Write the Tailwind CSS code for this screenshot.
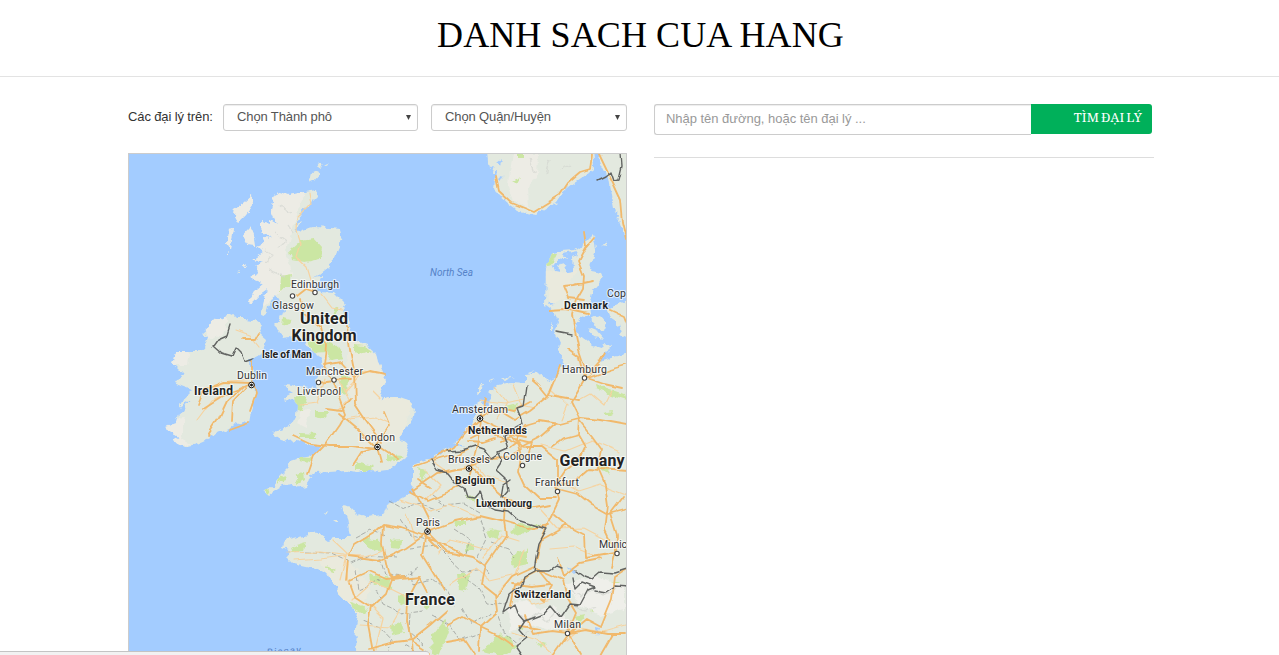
<!DOCTYPE html>
<html lang="vi">
<head>
<meta charset="utf-8">
<title>Danh sach cua hang</title>
<script src="https://cdn.jsdelivr.net/npm/@tailwindcss/browser@4"></script>
</head>
<body class="h-[655px] overflow-hidden bg-white font-['Liberation_Sans',sans-serif] text-[13px] text-[#333]">
<header class="flex h-[77px] justify-center border-b border-[#e3e3e3]">
  <h1 class="pt-[13px] pl-[2px] font-['Liberation_Serif',serif] text-[36px] leading-[44px] tracking-[0.1px] whitespace-nowrap text-black">DANH SACH CUA HANG</h1>
</header>
<main class="flex gap-[27px] pt-[27px] pl-[128px]">
  <section class="w-[499px]">
    <div class="flex h-[27px] tracking-[-0.12px]">
      <span class="w-[95px] leading-[25px] whitespace-nowrap">Các đại lý trên:</span>
      <div class="mr-[13px] flex h-[27px] w-[195px] items-center justify-between rounded-[3px] border border-[#ccc] pr-[6px] pb-[2px] pl-[13px] text-[#555] shadow-[inset_0_1px_1px_rgba(0,0,0,0.075)]"><span>Chọn Thành phô</span>
        <svg class="mt-[2px] h-[5px] w-[5px]" viewBox="0 0 5 5"><path d="M0 0h5L2.5 5z" fill="#444"/></svg></div>
      <div class="flex h-[27px] w-[196px] items-center justify-between rounded-[3px] border border-[#ccc] pr-[6px] pb-[2px] pl-[13px] text-[#555] shadow-[inset_0_1px_1px_rgba(0,0,0,0.075)]"><span>Chọn Quận/Huyện</span>
        <svg class="mt-[2px] h-[5px] w-[5px]" viewBox="0 0 5 5"><path d="M0 0h5L2.5 5z" fill="#444"/></svg></div>
    </div>
    <div class="mt-[22px] h-[502px] overflow-hidden border border-b-0 border-[#ccc]">
      <svg class="block h-[501px] w-[497px]" viewBox="129 154 497 501" font-family="Roboto, sans-serif">
        <defs>
          <filter id="coast" x="129" y="140" width="500" height="520" filterUnits="userSpaceOnUse" color-interpolation-filters="sRGB"><feTurbulence type="fractalNoise" baseFrequency=".13" numOctaves="3" seed="4"/><feDisplacementMap in="SourceGraphic" scale="7" xChannelSelector="R" yChannelSelector="G"/></filter>
          <filter id="rough" x="129" y="140" width="500" height="520" filterUnits="userSpaceOnUse" color-interpolation-filters="sRGB"><feTurbulence type="fractalNoise" baseFrequency=".06" numOctaves="1" seed="9"/><feDisplacementMap in="SourceGraphic" scale="7" xChannelSelector="R" yChannelSelector="G"/></filter>
          <g id="land">
            <path d="M278 192L289 195L305 192L316 190L317 197L308 206L300 215L295 225L301 222L295 232L305 229L313 227L330 228L341 229L343 236L340 244L334 258L329 268L320 275L311 277L323 276L322 281L312 287L320 292L334 293L343 302L347 318L352 334L355 340L367 345L376 353L378 363L382 371L386 382L379 393L382 399L390 397L400 397L411 401L415 410L413 422L405 430L399 438L406 443L409 450L405 458L397 464L388 470L380 471L368 470L355 473L345 471L330 472L315 473L309 478L306 487L300 488L292 484L283 485L275 490L268 495L263 491L272 487L280 477L287 470L290 461L302 457L313 455L322 446L308 445L298 440L287 441L280 439L272 434L280 430L290 426L296 415L297 405L294 398L285 402L284 398L293 393L287 389L285 384L298 386L310 387L318 389L316 380L320 371L324 365L318 355L310 350L305 345L308 338L297 339L290 337L282 338L278 330L274 326L281 318L284 310L280 300L276 295L272 298L268 306L266 316L261 315L264 302L267 290L260 295L252 303L248 302L254 291L262 284L252 280L250 277L260 272L255 266L264 262L253 259L263 252L257 246L264 243L263 237L271 238L261 229L261 222L270 224L270 220L277 224L271 210L274 200Z"/>
            <path d="M252 196L253 205L246 215L238 223L234 216L235 209L243 204ZM228 229L234 228L231 244L230 249L227 244ZM242 236L250 227L255 239L256 246L248 245ZM312 172L317 170L320 175L314 182L310 180ZM318 166l2-3l3 0l-2 5zM325 166l5-3l-2 4zM237 271l3-1l-2 3zM243 267l5-2l-2 3zM226 254l2-3l0 4z"/>
            <path d="M224 317L232 313L238 319L245 319L255 320L263 325L259 333L267 340L264 352L254 358L248 360L254 372L252 382L256 391L254 402L251 412L249 423L242 421L232 427L218 434L205 440L196 444L185 447L178 443L172 441L179 437L168 431L166 426L176 423L178 413L184 410L190 400L180 407L186 396L192 390L181 386L174 383L178 377L184 374L173 363L176 352L185 352L198 352L204 348L208 337L202 333L210 326L215 317L221 321Z"/>
            <path d="M487 150L488 163L489 169L494 165L492 172L497 172L495 180L494 190L500 196L508 203L515 208L518 212L526 213L536 215L545 209L556 202L562 193L573 184L583 177L592 171L594 166L592 150ZM598 150L601 166L605 170L608 178L610 190L612 203L614 213L620 220L625 235L630 240L630 150Z"/>
            <path d="M597 226L592 236L595 243L596 250L592 262L590 270L602 272L604 276L598 286L592 293L589 305L590 313L577 322L575 332L582 338L592 346L602 349L605 344L611 345L607 352L600 362L612 358L635 353L635 665L355 665L355 652L356 627L358 613L350 605L338 593L333 579L320 571L310 567L292 563L285 556L290 550L283 547L285 540L307 535L307 532L318 533L328 540L335 538L350 538L347 518L342 505L352 507L355 513L367 517L383 515L386 507L412 493L413 480L413 465L433 457L453 445L462 437L470 427L476 413L478 400L486 398L490 391L498 385L511 382L525 383L525 375L543 373L547 382L553 380L560 367L566 365L558 352L560 343L555 332L558 322L553 312L545 306L546 268L549 262L553 253L562 251L575 250L585 243L592 236Z"/>
            <path d="M592 318L600 316L606 323L604 330L595 328ZM608 309L620 302L630 304L630 339L618 334L623 327L610 318ZM586 327l12 5l6 7l-9-2zM602 244l6-3l-2 4zM324 513l5-2l-2 3zM333 520l5 0l-2 2zM478 393l4-9l2 0l-4 10zM487 381l9-2l-8 4zM502 379l12-1l-9 3zM528 373l8-2l-5 3zM551 323l3 4l-3 4zM251 340l7 2l-3 2z"/>
          </g>
          <mask id="inside" x="129" y="140" width="510" height="530" maskUnits="userSpaceOnUse"><use href="#land" fill="#fff"/></mask>
        </defs>
        <rect x="128" y="153" width="500" height="503" fill="#a3ccff"/>
        <g filter="url(#coast)">
          <use href="#land" fill="#e3e9df"/>
          <g mask="url(#inside)">
            <g fill="#efede7" opacity=".85"><path d="M262 185L306 192L296 215L291 237L286 252L292 273L282 291L264 306L240 315L245 245Z"/><path d="M222 180h34v46h-34zM222 225h35v32h-35zM513 153L538 153L537 178L528 186L529 210L514 201L508 184ZM166 348l24 2l-3 15l-17 0zM163 420l23-2l-5 20l10 6l-15 3zM302 408l8 3l-5 17l-8-4zM203 324l24-10l0 18l-18 8z"/></g>
            <g fill="#eaeadd"><path d="M350 335L384 360L390 405L360 412L345 385ZM545 272L578 269L564 298L550 307ZM320 560l25-5l26 34l-12 28l-22-20zM360 395l52 5l-8 38l-45 13zM445 425l25-5l5 17l-25 5z"/></g>
            <g fill="#cbe6a3"><path d="M290 250L300 241L314 239L322 248L320 259L305 262L292 260ZM281 276L292 274L290 287L280 290ZM308 340L324 341L338 347L342 359L333 361L327 352L312 353ZM354 345L365 346L372 351L364 354L354 351ZM341 374L348 377L347 395L340 392ZM294 397L307 398L303 411L297 410ZM299 433L318 434L316 438L299 438ZM315 412L327 412L324 419L315 417ZM355 462L374 466L370 470L355 470ZM386 455L403 456L397 461L386 460ZM295 474L304 472L305 480L298 484ZM298 456L312 457L310 463L300 461ZM278 479l8-3l-2 5l-7 3zM264 488l6 2l-3 5zM284 318l8 2l-3 6l-6-1zM333 308l5-2l1 6l-5 2z"/><path d="M290 547L307 542L304 551L292 552ZM326 566l10 4l-5 3zM363 537L380 540L381 553L374 550L363 545ZM390 540L402 539L401 549L391 548ZM369 574L389 578L392 590L381 588L370 580ZM398 596L407 593L405 605L398 602ZM351 602L369 608L364 613L352 608ZM391 626L402 622L405 632L392 635ZM432 635L444 620L449 631L440 655L431 652ZM457 574L470 574L466 591L459 590ZM466 544L475 543L474 551L466 551ZM512 556L528 549L528 565L514 568ZM514 524L541 525L525 533L512 535ZM491 529L502 531L498 540L486 535ZM454 520h11v5l-10 0zM465 496l12 1l-3 6zM595 384L607 388L625 394L627 400L611 395L596 389ZM602 413l10-2l-2 6zM551 254l6 0l-6 12l-3-2zM418 468l10 3l-7 10zM505 407l12-3l-2 9zM512 616l12 2l-1 12l-10-2zM573 616l12-2l-4 9zM590 605l12 2l-10 7zM607 581l12 0l-8 5zM511 180l9-4l-4 7zM518 153h5v5h-5zM483 651l14-16l12-1l7 14l-12 8zM596 465l9-2l7 12zM420 602l12-1l-4 8zM536 641l10 2l-6 5z"/></g>
            <g fill="#efefea"><path d="M509 606L522 600L540 610L555 605L565 620L552 630L530 624L510 632ZM565 585L595 576L625 585L625 610L600 616L580 605Z"/></g>
            <g fill="none" stroke="#d2d5cf" stroke-width="1.4" opacity=".65"><path d="M265 250l9 6l-7 6M275 232l11 8l-9 9M270 270l15 7M280 205l12 7M288 225l5 8M530 158l5 15M550 160l-5 14M561 170l8-5M516 612l10 9l11-8l10 9l10-12M570 590l10 8l13-9l10 7l14-7M574 606l11 5l11-4M520 640l9-9l10 5"/></g>
          </g>
          <g fill="#a3ccff"><path d="M483 398L489 394L490 407L482 404ZM553 266L559 258L568 260L563 254L578 251L576 256L572 257L573 271L567 272L565 264L557 266L560 272L555 271ZM450 443l17 3l-15 1zM566 567l10 4l-2 3zM596 627l4 1l-3 8zM295 230l8-3l-4 5zM549 302l5 3l-6 1zM497 163l5-4l-2 6zM500 176l5 1l-6 3z"/></g>
        </g>
        <g filter="url(#rough)" fill="none" stroke-linejoin="round" stroke-linecap="round">
          <g stroke="#8e918d" stroke-width=".9" stroke-linecap="butt" stroke-dasharray="5 2" opacity=".75"><path d="M305 552L330 553L352 563L370 555L395 557M355 538L370 530L386 536M355 570L358 590L380 580M380 558L385 575L405 577L418 567M390 500L405 508L420 504L440 510M400 520L410 535L426 540M410 548L437 545L452 560M376 590L383 605L400 613L424 610M363 620L380 627L392 640L389 655M410 570L413 585L432 579L448 591L455 605M432 495L445 505L464 503L480 512M455 530L470 540L466 554M480 520L486 539L478 556L490 574M491 543L508 549L515 558M462 575L477 586L487 603L507 605M432 615L450 625L460 640L482 632M410 613L409 632L424 645M462 607L471 624L490 614M403 645L420 655M450 560L462 571L477 570M498 616L505 635L518 646"/></g>
          <g stroke="#f6d3a0" stroke-width="1.2"><path d="M308 193L310 205L297 218L296 231L300 243L296 258L306 267L310 280M322 294L332 307L342 309M317 403L325 377M340 380L349 400L338 410M345 391L363 372L376 374M350 420L374 417L389 423M340 420L358 417M380 398L372 390M300 405L318 403M236 331L250 336L258 346M197 420L212 400L225 394M205 390L230 381L255 379M287 553L320 552L344 555L365 556L383 550M293 561L320 559L345 556L348 582M350 556L333 540M340 580L347 553M352 600L372 582L392 590L410 599M360 625L390 627L401 608M375 650L383 618L372 607M400 500L430 510L450 504L477 516M415 540L407 515M438 554L450 540L470 545L490 551M450 585L475 568L490 580L512 575M484 557L502 535L518 540M525 550L515 575L498 592M424 470L440 485L425 501M430 460L447 472L470 465M470 458L483 475L508 483M480 400L504 403L525 399M495 387L507 402L497 418M514 385L522 405L535 408M552 390L568 405L562 420M540 445L565 451L592 440L620 452M557 479L578 491L600 484L626 494M540 510L557 529L584 528L607 540M550 549L573 547L600 558M520 592L532 604L551 599M512 633L537 641L552 654M565 640L580 628L603 632L625 626M578 400L591 393L605 405L612 391"/></g>
          <g stroke="#f1b96c" stroke-width="1.8"><path d="M298 296L307 289L316 292M300 299L304 313L322 328L326 345L324 366L333 380L339 398L345 414L339 425L325 445L314 456L308 473M293 436L310 444L330 446L353 446L376 449M339 413L357 428L376 447M347 327L350 350L354 370L355 405L365 420L382 443M323 365L340 362L354 377L370 372L384 375M317 382L335 380L351 379M327 408L342 410L351 399M354 466L363 452L377 447L381 462M379 447L399 460M375 448L390 425L385 413M252 359L252 380L256 393L250 410M251 383L224 382L204 390L198 405M250 384L222 396L202 409M242 387L227 401L219 418L208 435M245 388L233 401L232 421M230 430L249 423M243 339L255 339L259 332M496 176L499 190L512 202L534 211L560 195L568 183L581 172L591 169L593 153M599 153L609 174L621 200L623 223L627 240"/><path d="M584 232L586 246L578 261L584 276L583 288L576 300L572 315L576 335L579 350L584 365L585 378L577 392L571 402L579 418L578 435L585 447L579 460L564 472L556 484L559 500L550 519L541 540L536 562M595 238L583 252M563 286L574 285L593 281M563 286L568 298L584 300M550 310L566 309L588 314M587 378L609 370L626 365M586 378L604 384L622 388M584 378L579 356L568 348M560 366L555 380L548 397L530 411L515 420L500 411M550 395L578 400M548 397L539 386L532 380M580 418L600 420L627 425M579 419L560 424L540 421L526 425L516 439L521 455L519 471L525 484L540 498L556 498M521 447L542 436L557 423M526 447L541 447L557 460L557 484M578 435L563 439L552 447M579 420L592 436L602 450L598 468L605 484L608 505L605 530L615 551L611 567M558 488L577 493L592 505L608 514L627 509M556 486L575 481L589 469L599 470M600 469L627 471M610 513L623 496M610 513L617 535L616 553M554 515L566 525L585 535L586 558L614 553M541 540L557 531L566 525M557 558L563 576L580 563L600 559"/><path d="M438 549L425 536L400 528L383 525L374 533L354 545L349 556L380 560L406 548L426 534L429 520L421 504L413 488M410 491L428 501L447 493L469 479L473 464L478 440L480 418L486 398M480 418L495 407L514 411L531 402M480 419L465 433L454 447L434 459L414 466M481 419L500 428L519 443M470 438L484 431L508 439L524 447M468 449L455 455L434 461M470 468L455 469L438 473L414 490M470 468L489 459L507 458L521 449M471 467L485 481L506 499L530 509L550 505M506 500L505 522L507 535L495 552L486 565L482 584L497 596L512 577L534 567M428 531L455 521L480 516L505 522L529 529L549 525M427 532L446 551L473 557L486 566M427 532L423 556L433 572L444 590M425 537L450 547L462 554M383 525L382 544L388 572L392 580L420 577L428 592M349 581L369 572L385 579L405 577M349 583L354 597L371 608L386 594L392 577M348 561L346 580M371 607L368 624L373 651M369 649L394 642L411 640L430 625L447 610M411 641L407 620L408 600L420 577M412 655L411 641L430 653M448 625L463 617L481 627L497 612L495 594M480 627L479 651M480 627L495 634L512 646M475 655L465 640L447 643M539 570L552 586L544 600L532 590M536 568L563 580L567 597L576 612L568 632M539 569L527 575L515 586L511 606M526 616L533 634L552 631L568 633L586 630L607 634L626 634M520 626L540 629M567 634L552 655M568 634L580 655M568 634L586 619L601 627L612 600L615 577L626 570M600 655L612 634"/><path d="M610 310L623 316L628 329M606 353L600 363L590 374M500 440l12-6l14 3M510 447l9-7l13 3l-4 11l-12 3M468 441l15 1l12-4M418 480l12 8M512 584l20 2l18-2"/></g>
          <g stroke="#626462" stroke-width="1.4"><path d="M230 325L227 335L218 339L213 346L222 354L232 357L236 348L241 353L244 361L253 358M556 331L572 334M597 180L605 176L611 171L614 180L618 179L621 166L620 153M527 385L524 407L518 409L521 417L523 424L512 430L503 435L507 448L498 452L502 461L496 470L506 479L508 491L503 497M431 460L437 470L447 473L455 483L464 488L467 497L474 498L480 491L484 504L495 510L509 512L518 520L531 524L547 529L539 543L536 558L534 571L523 577L520 587L510 595L504 613L515 605L518 613L525 621L543 614L551 605L561 617L570 604L580 605L588 590L595 587L582 582L576 588L574 577M535 570L550 570L556 566L561 568M448 451L462 450L475 446L484 449L492 459L498 455M576 570L584 576L592 579L600 572L615 573L628 569M595 590L606 592L615 586L628 587M525 621L519 630L526 638L516 646L522 655M501 497L503 485L510 480"/></g>
        </g>
        <g fill="#fff" stroke="#444" stroke-width="1.1"><circle cx="292.5" cy="296" r="2.2"/><circle cx="315" cy="292.5" r="2.2"/><circle cx="318.5" cy="382.5" r="2.2"/><circle cx="334" cy="380" r="2.2"/><circle cx="584.5" cy="378" r="2.2"/><circle cx="522.5" cy="465.5" r="2.2"/><circle cx="557.5" cy="491.5" r="2.2"/><circle cx="617" cy="553.5" r="2.2"/><circle cx="567.5" cy="633.5" r="2.2"/></g>
        <g fill="#111" stroke="#111"><circle cx="251.5" cy="385" r="2.8" fill="#fff"/><circle cx="251.5" cy="385" r="1"/><circle cx="377.5" cy="447" r="2.8" fill="#fff"/><circle cx="377.5" cy="447" r="1"/><circle cx="480" cy="418.5" r="2.8" fill="#fff"/><circle cx="480" cy="418.5" r="1"/><circle cx="469" cy="468.5" r="2.8" fill="#fff"/><circle cx="469" cy="468.5" r="1"/><circle cx="427.5" cy="531.5" r="2.8" fill="#fff"/><circle cx="427.5" cy="531.5" r="1"/></g>
        <g font-size="10.5" fill="#333" stroke="#fff" stroke-opacity=".65" stroke-width="2.2" stroke-linejoin="round" paint-order="stroke">
          <text x="291" y="287.500" textLength="48">Edinburgh</text><text x="272" y="309" textLength="42">Glasgow</text><text x="237" y="379" textLength="30">Dublin</text><text x="306" y="374.500" textLength="57">Manchester</text><text x="297" y="395" textLength="44">Liverpool</text><text x="359" y="441" textLength="36">London</text><text x="452" y="412.500" textLength="56">Amsterdam</text><text x="448" y="463" textLength="42">Brussels</text><text x="503" y="460" textLength="39">Cologne</text><text x="562" y="373" textLength="45">Hamburg</text><text x="535" y="486" textLength="44">Frankfurt</text><text x="416" y="525.500" textLength="24">Paris</text><text x="554" y="628" textLength="27">Milan</text><text x="607" y="297" textLength="19">Cop</text><text x="599" y="548" textLength="28">Munic</text>
        </g>
        <g font-weight="700" font-size="10.500" fill="#222" stroke="#fff" stroke-opacity=".65" stroke-width="2.2" stroke-linejoin="round" paint-order="stroke">
          <text x="262" y="358" textLength="50">Isle of Man</text><text x="564" y="309" textLength="44">Denmark</text><text x="468" y="434" textLength="59">Netherlands</text><text x="455" y="484" textLength="40">Belgium</text><text x="476" y="507" textLength="56">Luxembourg</text><text x="514" y="598" textLength="57">Switzerland</text><text x="194" y="395" font-size="12" textLength="39">Ireland</text><text x="300" y="324" font-size="16" textLength="48">United</text><text x="291.500" y="340.500" font-size="16" textLength="65">Kingdom</text><text x="405" y="605" font-size="16" textLength="50">France</text><text x="559.500" y="466" font-size="16" textLength="65">Germany</text>
        </g>
        <g font-size="10" font-style="italic" fill="#5582c7"><text x="430" y="275.500" textLength="43">North Sea</text><text x="267" y="654.500" textLength="34" transform="rotate(-5 284 654)">Biscay</text></g>
      </svg>
    </div>
  </section>
  <section class="w-[500px]">
    <div class="flex h-[31px]">
      <div class="h-[31px] w-[377px] rounded-l-[3px] border border-r-0 border-[#ccc] pl-[11px] leading-[27px] tracking-[-0.03px] text-[#999] shadow-[inset_0_1px_1px_rgba(0,0,0,0.075)]">Nhập tên đường, hoặc tên đại lý ...</div>
      <button class="h-[30px] w-[121px] rounded-r-[3px] bg-[#00b05a] pr-[10px] pb-[3px] text-right font-['Noto_Serif','DejaVu_Serif',serif] text-[13px] tracking-[0.1px] [word-spacing:-1.5px] whitespace-nowrap text-white">TÌM ĐẠI LÝ</button>
    </div>
    <hr class="mt-[22px] border-[#ddd]">
  </section>
</main>
<div class="fixed bottom-0 left-0 h-[4px] w-[429px] rounded-tr-[3px] border-t border-[#c4c4c4] bg-[#f2f2f2]"></div>
</body>
</html>
